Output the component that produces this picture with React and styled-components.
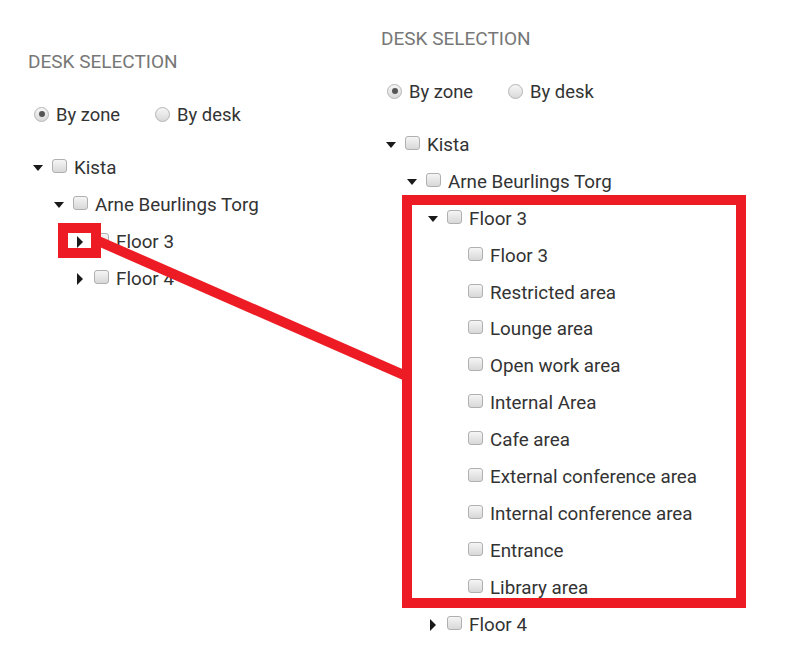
import React from 'react';
import styled, { createGlobalStyle } from 'styled-components';

const GlobalStyle = createGlobalStyle`
	html, body {
		margin: 0;
		padding: 0;
		background: #ffffff;
	}
	body {
		font-family: Roboto, 'Liberation Sans', Arial, sans-serif;
		color: #333333;
	}
`;

const LEFT_TREE = [
	{
		label: 'Kista',
		open: true,
		children: [
			{
				label: 'Arne Beurlings Torg',
				open: true,
				children: [
					{ label: 'Floor 3', open: false, children: [] },
					{ label: 'Floor 4', open: false, children: [] },
				],
			},
		],
	},
];

const ZONES = [
	'Floor 3',
	'Restricted area',
	'Lounge area',
	'Open work area',
	'Internal Area',
	'Cafe area',
	'External conference area',
	'Internal conference area',
	'Entrance',
	'Library area',
];

const RIGHT_TREE = [
	{
		label: 'Kista',
		open: true,
		children: [
			{
				label: 'Arne Beurlings Torg',
				open: true,
				children: [
					{ label: 'Floor 3', open: true, children: ZONES.map(label => ({ label })) },
					{ label: 'Floor 4', open: false, children: [] },
				],
			},
		],
	},
];

const TreeNode = ({ node, level }) => {
	const hasChildren = Array.isArray(node.children);
	return (
		<>
			<Row $level={level}>
				<CaretSlot>{hasChildren && <Caret $open={node.open} />}</CaretSlot>
				<Checkbox />
				<RowLabel>{node.label}</RowLabel>
			</Row>
			{hasChildren &&
				node.open &&
				node.children.map((child, i) => (
					<TreeNode key={`${child.label}-${i}`} node={child} level={level + 1} />
				))}
		</>
	);
};

const DeskSelection = ({ tree, offset }) => (
	<Panel $offset={offset}>
		<Heading>Desk selection</Heading>
		<RadioGroup>
			<RadioLabel>
				<Radio $checked />
				By zone
			</RadioLabel>
			<RadioLabel>
				<Radio />
				By desk
			</RadioLabel>
		</RadioGroup>
		<Tree>
			{tree.map((node, i) => (
				<TreeNode key={`root-${i}`} node={node} level={0} />
			))}
		</Tree>
	</Panel>
);

const App = () => (
	<>
		<GlobalStyle />
		<Page>
			<DeskSelection tree={LEFT_TREE} offset={51} />
			<DeskSelection tree={RIGHT_TREE} offset={28} />
			<Annotation width="805" height="666" viewBox="0 0 805 666">
				<line x1="96" y1="240" x2="406" y2="376" stroke="#ed1c24" strokeWidth="10" />
				<rect x="63" y="228" width="33" height="25" fill="none" stroke="#ed1c24" strokeWidth="10" />
				<rect x="407" y="200" width="334" height="403" fill="none" stroke="#ed1c24" strokeWidth="10" />
			</Annotation>
		</Page>
	</>
);

const Page = styled.div`
	position: relative;
	width: 805px;
	height: 666px;
	overflow: hidden;
	display: flex;
	align-items: flex-start;
	padding-left: 28px;
	box-sizing: border-box;
`;

const Panel = styled.div`
	width: 353px;
	flex-shrink: 0;
	padding-top: ${props => props.$offset}px;
	display: flex;
	flex-direction: column;
`;

const Heading = styled.div`
	font-size: 19px;
	line-height: 22px;
	text-transform: uppercase;
	color: #777777;
`;

const RadioGroup = styled.div`
	display: flex;
	align-items: center;
	height: 24px;
	margin-top: 29px;
	padding-left: 6px;
`;

const RadioLabel = styled.label`
	display: flex;
	align-items: center;
	font-size: 18.4px;
	color: #333333;
	margin-right: 35px;
`;

const Radio = styled.span`
	width: 15px;
	height: 15px;
	box-sizing: border-box;
	border-radius: 50%;
	border: 1px solid #b4b4b4;
	background: linear-gradient(#f6f6f6, #d9d9d9);
	margin-right: 7px;
	display: flex;
	align-items: center;
	justify-content: center;
	&::after {
		content: '';
		display: ${props => (props.$checked ? 'block' : 'none')};
		width: 6px;
		height: 6px;
		border-radius: 50%;
		background: #555555;
	}
`;

const Tree = styled.div`
	margin-top: 23.5px;
	display: flex;
	flex-direction: column;
`;

const Row = styled.div`
	display: flex;
	align-items: center;
	height: 36.9px;
	padding-left: ${props => 4 + props.$level * 21}px;
	font-size: 18.8px;
	color: #333333;
	white-space: nowrap;
`;

const CaretSlot = styled.span`
	width: 11px;
	margin-right: 9px;
	display: flex;
	justify-content: center;
	align-items: center;
`;

const Caret = styled.span`
	width: 0;
	height: 0;
	${props =>
		props.$open
			? `border-left: 5.5px solid transparent;
		border-right: 5.5px solid transparent;
		border-top: 6px solid #1a1a1a;`
			: `border-top: 6px solid transparent;
		border-bottom: 6px solid transparent;
		border-left: 6px solid #1a1a1a;`}
`;

const Checkbox = styled.span`
	width: 15px;
	height: 14px;
	box-sizing: border-box;
	border: 1px solid #b0b0b0;
	border-radius: 3px;
	background: linear-gradient(#f5f5f5, #d8d8d8);
	margin-right: 7px;
	margin-bottom: 4px;
`;

const RowLabel = styled.span`
	line-height: normal;
`;

const Annotation = styled.svg`
	position: absolute;
	top: 0;
	left: 0;
	pointer-events: none;
`;

export default App;
